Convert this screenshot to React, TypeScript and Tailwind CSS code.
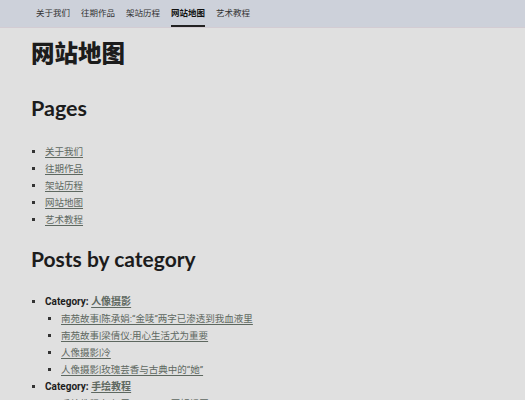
const navItems = ["关于我们", "往期作品", "架站历程", "网站地图", "艺术教程"];

const categories = [
  {
    name: "人像摄影",
    posts: [
      "南苑故事|陈承娟:“金唛”两字已渗透到我血液里",
      "南苑故事|梁倩仪:用心生活尤为重要",
      "人像摄影|冷",
      "人像摄影|玫瑰芸香与古典中的“她”",
    ],
  },
  {
    name: "手绘教程",
    posts: ["手绘教程|如何用Procreate画好插画"],
  },
];

const cjk = "font-['Roboto','Noto_Sans_CJK_SC',sans-serif]";
const heading = "font-['Lato','Noto_Sans_CJK_SC',sans-serif]";
const link = "text-[#5e6860] underline underline-offset-2 decoration-[#5e6860]";

export default function App() {
  return (
    <div className={`min-h-[400px] bg-[#e0e0e0] text-[#1c1c1c] ${cjk}`}>
      <nav className="h-[28px] bg-[#cdd1da] border-b border-[#d3ccd3] flex items-stretch gap-[11px] pl-[36px] text-[8.5px]">
        {navItems.map((item) => (
          <a
            key={item}
            className={`flex items-center pt-[1px] border-b-2 ${
              item === "网站地图"
                ? "font-bold border-[#222] text-[#111]"
                : "border-transparent text-[#333]"
            }`}
          >
            {item}
          </a>
        ))}
      </nav>

      <main className="px-[31px]">
        <h1 className={`${heading} text-[23.5px] font-black leading-none pt-[14px]`}>
          网站地图
        </h1>

        <h2 className={`${heading} text-[21.5px] font-bold leading-none mt-[32px]`}>
          Pages
        </h2>
        <ul className="mt-[24px] pl-[14px] list-[square] text-[9.5px] leading-[17px] marker:text-[#333]">
          {navItems.map((item) => (
            <li key={item}>
              <a className={link}>{item}</a>
            </li>
          ))}
        </ul>

        <h2 className={`${heading} text-[21px] font-bold leading-none mt-[20px]`}>
          Posts by category
        </h2>
        <ul className="mt-[24px] pl-[14px] list-[square] text-[9.5px] leading-[17px] marker:text-[#333]">
          {categories.map((cat) => (
            <li key={cat.name}>
              <span className="font-bold text-[10px]">
                Category: <a className={link}>{cat.name}</a>
              </span>
              <ul className="pl-[16px] list-[square]">
                {cat.posts.map((p) => (
                  <li key={p}>
                    <a className={link}>{p}</a>
                  </li>
                ))}
              </ul>
            </li>
          ))}
        </ul>
      </main>
    </div>
  );
}
